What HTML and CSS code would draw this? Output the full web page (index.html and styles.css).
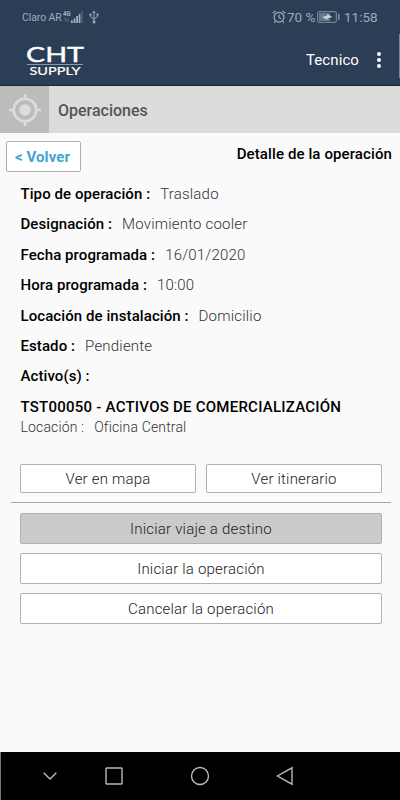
FILE: index.html
```html
<!DOCTYPE html>
<html lang="es">
<head>
    <meta charset="UTF-8">
    <meta name="viewport" content="width=device-width, initial-scale=1.0">
    <link rel="stylesheet" href="styles.css">
    <title>Operaciones</title>
</head>
<body>

<!-- Barra de estado -->
<div class="status-bar">
    <span class="carrier">Claro AR</span>
    <svg class="signal" width="20" height="14" viewBox="0 0 20 14">
        <text class="network" x="0" y="5.6" textLength="7.5" lengthAdjust="spacingAndGlyphs">4G</text>
        <path d="M2.5 12V8M1.3 9.2l1.2-1.2M5 8v4" stroke="#566a7d" fill="none"/>
        <path d="M8 10.5h1.8V13H8zM10.6 8.5h1.8V13h-1.8zM13.2 6h1.8v7h-1.8zM15.8 4h1.6v9h-1.6z" fill="#a5b3c1"/>
        <path d="M18.2 1h1.5v12h-1.5z" fill="#50667a"/>
    </svg>
    <svg class="usb" width="10" height="14" viewBox="0 0 10 14">
        <g fill="none" stroke="#9dabb9" stroke-width="1">
            <path d="M5 2v9M1.5 4.5v2.2L5 9l3.5-2.2V4.5"/>
        </g>
        <path d="M5 .5l1.8 2.3H3.2zM.5 3.5h2v2h-2zM7.5 3.5h2v2h-2z" fill="#9dabb9"/>
        <circle cx="5" cy="12" r="1.5" fill="#9dabb9"/>
    </svg>
    <svg class="alarm" width="14" height="14" viewBox="0 0 14 14" fill="none" stroke="#9dabb9" stroke-width="1.2">
        <circle cx="7" cy="7.2" r="4.9"/>
        <path d="M7 4.5v3l2 1.2M.8 3.2L3.5 1M13.2 3.2L10.5 1M3.6 11l-1.4 1.8M10.4 11l1.4 1.8"/>
    </svg>
    <span class="percent">70 %</span>
    <svg class="battery" width="24" height="12" viewBox="0 0 24 12">
        <rect x=".7" y=".7" width="18.6" height="10.6" rx="1" fill="none" stroke="#8796a5"/>
        <path d="M2 2h11v8H2z" fill="#66798b"/>
        <path d="M5 6l5-1.2V3l5.5 3-5 1.2V9z" fill="#ccd3da"/>
        <path d="M21.8 3v6" stroke="#8796a5" stroke-width="1.5"/>
    </svg>
    <span class="clock">11:58</span>
</div>

<!-- Cabecera -->
<div class="header">
    <svg class="logo" width="58" height="32" viewBox="0 0 58 32">
        <text class="logo-main" x="-1" y="16.5" textLength="58" lengthAdjust="spacingAndGlyphs">CHT</text>
        <path d="M0 19.5h56" stroke="#7f9cab"/>
        <text class="logo-sub" x="2.5" y="30" textLength="51" lengthAdjust="spacingAndGlyphs">SUPPLY</text>
    </svg>
    <span class="user">Tecnico</span>
    <svg class="menu" width="4" height="16" viewBox="0 0 4 16" fill="#fff">
        <circle cx="2" cy="2" r="2"/>
        <circle cx="2" cy="8" r="2"/>
        <circle cx="2" cy="14" r="2"/>
    </svg>
</div>

<div class="section">
    <div class="section-icon">
        <svg width="34" height="34" viewBox="0 0 34 34">
            <circle cx="17" cy="17" r="11.3" fill="none" stroke="#dcdcdc" stroke-width="2.6"/>
            <circle cx="17" cy="17" r="5.8" fill="#dcdcdc"/>
            <path d="M17 1v5M17 28v5M1 17h5M28 17h5" stroke="#dcdcdc" stroke-width="2.6"/>
        </svg>
    </div>
    <span class="section-title">Operaciones</span>
</div>

<div class="content">
    <div class="top-row">
        <button class="back">&lt; Volver</button>
        <span class="detail-title">Detalle de la operación</span>
    </div>

    <div class="details">
        <div class="row"><b>Tipo de operación :</b><span>Traslado</span></div>
        <div class="row"><b>Designación :</b><span>Movimiento cooler</span></div>
        <div class="row"><b>Fecha programada :</b><span>16/01/2020</span></div>
        <div class="row"><b>Hora programada :</b><span>10:00</span></div>
        <div class="row"><b>Locación de instalación :</b><span>Domicilio</span></div>
        <div class="row"><b>Estado :</b><span>Pendiente</span></div>
        <div class="row"><b>Activo(s) :</b></div>
        <div class="row asset"><b>TST00050 - ACTIVOS DE COMERCIALIZACIÓN</b></div>
        <div class="location"><span>Locación :</span><span>Oficina Central</span></div>
    </div>

    <div class="links">
        <button class="btn">Ver en mapa</button>
        <button class="btn">Ver itinerario</button>
    </div>
    <hr>
    <div class="actions">
        <button class="btn active">Iniciar viaje a destino</button>
        <button class="btn">Iniciar la operación</button>
        <button class="btn">Cancelar la operación</button>
    </div>
</div>

<!-- Barra de navegación -->
<div class="nav-bar">
    <svg width="14" height="8" viewBox="0 0 14 8"><path d="M.7.7L7 7 13.3.7"/></svg>
    <svg width="18" height="18" viewBox="0 0 18 18"><rect x="1" y="1" width="16" height="16" rx=".5"/></svg>
    <svg width="20" height="20" viewBox="0 0 20 20"><circle cx="10" cy="10" r="8.5"/></svg>
    <svg width="18" height="20" viewBox="0 0 18 20"><path d="M16 1.8v16.4L1.5 10z"/></svg>
</div>

</body>
</html>
```
FILE: styles.css
```css
* {
    box-sizing: border-box;
}

body {
    margin: 0;
    height: 100vh;
    display: flex;
    flex-direction: column;
    font-family: Roboto, sans-serif;
    background-color: #fafafa;
    overflow: hidden;
}

.status-bar {
    height: 34px;
    padding: 0 22px;
    display: flex;
    align-items: center;
    background-color: #2c3e55;
    color: #9dabb9;
    font-size: 14px;
    white-space: nowrap;
}

.carrier {
    width: 40px;
    font-size: 10.5px;
    letter-spacing: -0.1px;
}

.network {
    font-size: 7px;
    font-weight: bold;
    fill: #a5b3c1;
}

.signal {
    margin-left: 1px;
    overflow: visible;
}

.usb {
    margin-left: 6px;
}

.alarm {
    margin-left: auto;
}

.percent {
    margin-left: 1px;
    width: 28px;
    font-size: 13.5px;
}

.battery {
    margin-left: 2px;
}

.clock {
    margin-left: 3px;
    width: 34px;
    font-size: 13.5px;
}

.header {
    height: 52px;
    padding: 0 19px 0 27px;
    display: flex;
    align-items: center;
    background: linear-gradient(#6f8b98, #6f8b98) right top / 1px 44px no-repeat #2c3e55;
    border-bottom: 1px solid #14283d;
    color: #fff;
}

.logo {
    margin-top: 2px;
    overflow: visible;
}

.logo-main {
    font-family: Lato, sans-serif;
    font-size: 20.5px;
    stroke: #fff;
    stroke-width: 0.4;
    fill: #fff;
}

.logo-sub {
    font-family: Lato, sans-serif;
    font-size: 11.5px;
    stroke: #fff;
    stroke-width: 0.2;
    fill: #fff;
}

.user {
    margin-left: auto;
    font-size: 15px;
    letter-spacing: 0.1px;
}

.menu {
    margin-left: 18px;
}

.section {
    height: 47px;
    display: flex;
    align-items: center;
    background-color: #dcdcdc;
}

.section-icon {
    width: 49px;
    height: 47px;
    display: flex;
    align-items: center;
    justify-content: center;
    background-color: #bcbcbc;
}

.section-title {
    margin-left: 9px;
    margin-top: 2px;
    font-size: 16px;
    font-weight: 500;
    color: #555;
}

.content {
    flex: 1;
}

.top-row {
    height: 46px;
    padding: 8px 8px 0 6px;
    display: flex;
    align-items: flex-start;
    justify-content: space-between;
}

.back {
    width: 75px;
    height: 31px;
    padding: 0 2px 0 0;
    border: 1px solid #b0b0b0;
    border-radius: 2px;
    background-color: #fff;
    font-family: inherit;
    font-size: 15px;
    font-weight: bold;
    letter-spacing: 0.1px;
    color: #41a5d0;
}

.detail-title {
    margin-top: 4px;
    font-size: 15px;
    font-weight: 500;
    letter-spacing: 0.11px;
    color: #000;
}

.details {
    padding-left: 20.5px;
    font-size: 15px;
}

.row {
    height: 30.4px;
    line-height: 30.4px;
    white-space: nowrap;
}

.row b {
    margin-right: 10px;
    font-weight: 500;
    letter-spacing: 0.08px;
    color: #000;
}

.row span {
    font-weight: 300;
    letter-spacing: 0.2px;
    color: #333;
}

.asset b {
    letter-spacing: 0.24px;
}

.location {
    height: 20px;
    margin-top: -5px;
    line-height: 20px;
    font-size: 14px;
    font-weight: 300;
    letter-spacing: 0.15px;
    color: #333;
}

.location span {
    margin-right: 10px;
}

.links {
    margin: 27px 18px 9px 20px;
    display: grid;
    grid-template-columns: 1fr 1fr;
    gap: 10px;
}

.btn {
    height: 29px;
    padding: 0;
    border: 1px solid #b0b0b0;
    border-radius: 2px;
    background-color: #fff;
    font-family: inherit;
    font-size: 15px;
    font-weight: 300;
    letter-spacing: 0.2px;
    color: #222;
}

hr {
    margin: 0 9px 0 11px;
    border: 0;
    border-top: 1px solid #a5a7aa;
}

.actions {
    margin: 10px 18px 0 20px;
    display: grid;
    gap: 9px;
}

.actions .btn {
    height: 31px;
}

.btn.active {
    background-color: #cbcbcb;
}

.nav-bar {
    height: 48px;
    padding-left: 42px;
    display: flex;
    align-items: center;
    background-color: #000;
    border-left: 1px solid #777;
}

.nav-bar svg {
    fill: none;
    stroke: #b9b9b9;
    stroke-width: 1.4;
}

.nav-bar svg + svg {
    margin-left: 48px;
}

.nav-bar svg:nth-child(3) {
    margin-left: 67px;
}

.nav-bar svg:nth-child(4) {
    margin-left: 66px;
}
```
